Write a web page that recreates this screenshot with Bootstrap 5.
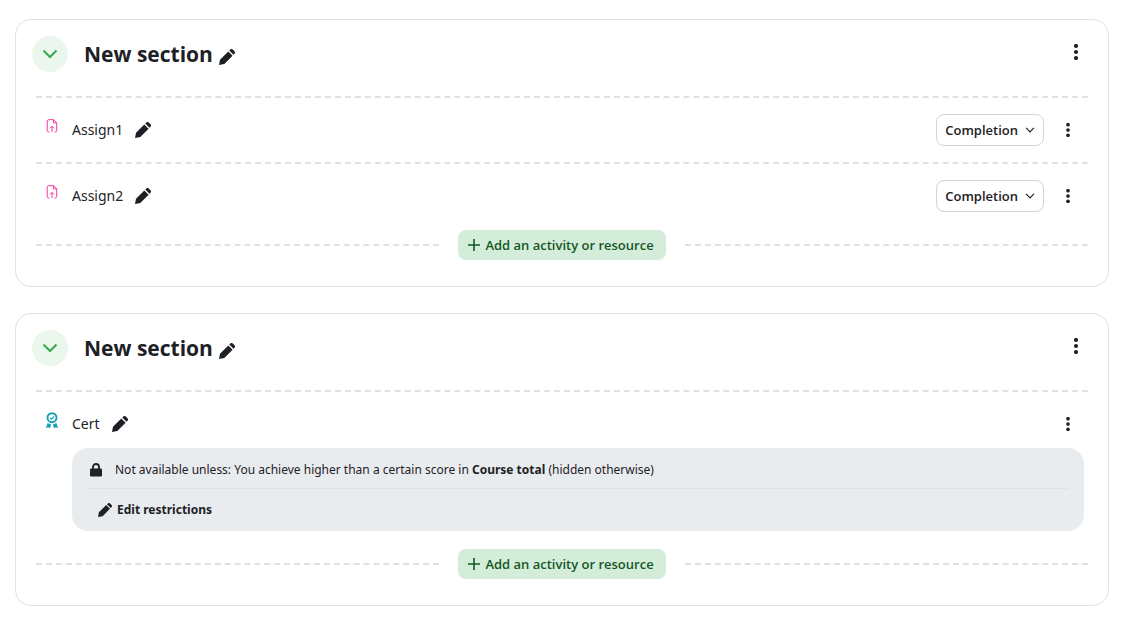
<!DOCTYPE html>
<html lang="en">
<head>
<meta charset="utf-8">
<meta name="viewport" content="width=device-width, initial-scale=1">
<title>Course sections</title>
<link href="https://cdn.jsdelivr.net/npm/bootstrap@5.3.0/dist/css/bootstrap.min.css" rel="stylesheet">
<style>
  body { font-family: "Noto Sans", "Open Sans", sans-serif; font-size: 14px; line-height: 20px; color: #1d2125; background: #fff; }
  svg { display: block; flex: none; }
  .course { padding: 19px 27px 23px 15px; display: grid; gap: 26px; }
  .section { border: 1px solid #dee2e6; border-radius: 16px; padding: 0 20px 26px; }
  .section-head { height: 76px; padding: 16px 4px 0 0; margin-left: -4px; }
  .section-head h2 { font-family: "Open Sans", sans-serif; font-size: 21px; line-height: 36px; font-weight: 700; }
  .plain { border: 0; background: none; padding: 0; color: inherit; display: flex; align-items: center; justify-content: center; }
  .toggle { width: 36px; height: 36px; border-radius: 50%; background: #ebf7ed; color: #37a94c; margin-right: 16px; }
  .head-edit { margin: 13px 0 0 6px; }
  .kebab { width: 16px; height: 32px; }
  .module { border-top: 2px dashed #dee2e6; padding: 16px 12px 16px 8px; }
  .module-row { min-height: 32px; }
  .module-icon { width: 16px; height: 24px; margin-right: 12px; align-self: flex-start; padding-top: 5px; }
  .assign-icon { color: #f7369e; }
  .cert-icon { color: #11a0b4; padding-top: 4px; }
  .name-link { color: inherit; text-decoration: none; margin-right: 12px; }
  .completion { height: 32px; border: 1px solid #ced4da; border-radius: 8px; background: #fff; color: inherit; font-family: "Open Sans", sans-serif; font-size: 13px; font-weight: 600; padding: 0 8px; gap: 7px; margin-right: 16px; }
  .restriction { background: #e9ecef; border-radius: 16px; margin: 8px -8px 0 28px; padding: 0 16px; font-size: 12px; }
  .restriction-text { min-height: 41px; padding: 4px 0 0 2px; gap: 13px; border-bottom: 1px solid #dee2e6; }
  .restriction-edit { min-height: 42px; padding-left: 10px; }
  .restriction-edit a { color: inherit; text-decoration: none; font-weight: 700; gap: 5px; }
  .adder { gap: 19px; margin-top: 2px; }
  .rule { border-top: 2px dashed #dee2e6; }
  .add-btn { height: 30px; border: 0; border-radius: 8px; background: #d4edda; color: #155724; font-family: "Open Sans", sans-serif; font-size: 13px; font-weight: 600; padding: 0 12px 0 10px; gap: 5px; white-space: nowrap; }
</style>
</head>
<body>
<svg class="d-none" aria-hidden="true">
  <symbol id="pencil" viewBox="0 0 16 16"><path fill="currentColor" d="M0 16l1-5.300L9.300 2.400l4.300 4.300L5.300 15zM10.300 1.500l1-1c.7-.7 1.800-.7 2.500 0l1.700 1.700c.7.7.7 1.800 0 2.500l-1 1z"/></symbol>
  <symbol id="dots" viewBox="0 0 6 16"><g fill="currentColor"><circle cx="3" cy="2" r="2.100"/><circle cx="3" cy="8" r="2.100"/><circle cx="3" cy="14" r="2.100"/></g></symbol>
  <symbol id="chevron" viewBox="0 0 16 10"><path d="M1.500 1.500L8 8l6.500-6.500" fill="none" stroke="currentColor" stroke-width="2"/></symbol>
  <symbol id="plus" viewBox="0 0 12 12"><path d="M6 0v12M0 6h12" fill="none" stroke="currentColor" stroke-width="1.600"/></symbol>
  <symbol id="assign" viewBox="0 0 12 14"><path d="M3.500 13H2.700a1.500 1.500 0 0 1-1.500-1.500V2.200A1.500 1.500 0 0 1 2.700.700H7.500L10.700 3.800V11.500a1.500 1.500 0 0 1-1.500 1.500h-.7M7.500 .7v3.100h3.200M6 13V7.500M4 9.300L6 7.300 8 9.300" fill="none" stroke="currentColor"/></symbol>
  <symbol id="cert" viewBox="0 0 14 17"><circle cx="7" cy="5.700" r="4.500" fill="none" stroke="currentColor" stroke-width="1.900"/><path d="M4.900 5.700l1.500 1.500L9.100 4.500" fill="none" stroke="currentColor" stroke-width="1.200"/><path fill="currentColor" d="M2.600 11l3.500 1.400L5 16.300l-1.900-1-2.100.6zM11.400 11L7.900 12.400 9 16.300l1.900-1 2.100.6z"/></symbol>
  <symbol id="lock" viewBox="0 0 12 14"><path d="M3 6V4a3 3 0 0 1 6 0v2" fill="none" stroke="currentColor" stroke-width="1.800"/><rect y="5.500" width="12" height="8" rx="1.300" fill="currentColor"/></symbol>
</svg>

<main class="course">
  <section class="section">
    <header class="section-head d-flex align-items-start">
      <button class="plain toggle" type="button" aria-label="Collapse section"><svg width="16" height="10"><use href="#chevron"/></svg></button>
      <h2 class="m-0">New section</h2>
      <button class="plain head-edit" type="button" aria-label="Edit section name"><svg width="16" height="16"><use href="#pencil"/></svg></button>
      <button class="plain kebab ms-auto" type="button" aria-label="Section actions"><svg width="6" height="16"><use href="#dots"/></svg></button>
    </header>
    <ul class="list-unstyled m-0">
      <li class="module">
        <div class="module-row d-flex align-items-center">
          <span class="module-icon assign-icon d-flex justify-content-center"><svg width="12" height="14"><use href="#assign"/></svg></span>
          <a class="name-link" href="#">Assign1</a>
          <button class="plain" type="button" aria-label="Edit name"><svg width="16" height="16"><use href="#pencil"/></svg></button>
          <button class="completion d-flex align-items-center ms-auto" type="button">Completion <svg width="10" height="6"><use href="#chevron"/></svg></button>
          <button class="plain kebab" type="button" aria-label="Activity actions"><svg width="6" height="14"><use href="#dots"/></svg></button>
        </div>
      </li>
      <li class="module">
        <div class="module-row d-flex align-items-center">
          <span class="module-icon assign-icon d-flex justify-content-center"><svg width="12" height="14"><use href="#assign"/></svg></span>
          <a class="name-link" href="#">Assign2</a>
          <button class="plain" type="button" aria-label="Edit name"><svg width="16" height="16"><use href="#pencil"/></svg></button>
          <button class="completion d-flex align-items-center ms-auto" type="button">Completion <svg width="10" height="6"><use href="#chevron"/></svg></button>
          <button class="plain kebab" type="button" aria-label="Activity actions"><svg width="6" height="14"><use href="#dots"/></svg></button>
        </div>
      </li>
    </ul>
    <div class="adder d-flex align-items-center">
      <div class="rule flex-fill"></div>
      <button class="add-btn d-flex align-items-center" type="button"><svg width="12" height="12"><use href="#plus"/></svg>Add an activity or resource</button>
      <div class="rule flex-fill"></div>
    </div>
  </section>

  <section class="section">
    <header class="section-head d-flex align-items-start">
      <button class="plain toggle" type="button" aria-label="Collapse section"><svg width="16" height="10"><use href="#chevron"/></svg></button>
      <h2 class="m-0">New section</h2>
      <button class="plain head-edit" type="button" aria-label="Edit section name"><svg width="16" height="16"><use href="#pencil"/></svg></button>
      <button class="plain kebab ms-auto" type="button" aria-label="Section actions"><svg width="6" height="16"><use href="#dots"/></svg></button>
    </header>
    <ul class="list-unstyled m-0">
      <li class="module">
        <div class="module-row d-flex align-items-center">
          <span class="module-icon cert-icon d-flex justify-content-center"><svg width="14" height="17"><use href="#cert"/></svg></span>
          <a class="name-link" href="#">Cert</a>
          <button class="plain" type="button" aria-label="Edit name"><svg width="16" height="16"><use href="#pencil"/></svg></button>
          <button class="plain kebab ms-auto" type="button" aria-label="Activity actions"><svg width="6" height="14"><use href="#dots"/></svg></button>
        </div>
        <div class="restriction">
          <div class="restriction-text d-flex align-items-center">
            <svg width="12" height="14"><use href="#lock"/></svg>
            <span>Not available unless: You achieve higher than a certain score in <strong>Course total</strong> (hidden otherwise)</span>
          </div>
          <div class="restriction-edit d-flex align-items-center">
            <a class="d-flex align-items-center" href="#"><svg width="14" height="14"><use href="#pencil"/></svg>Edit restrictions</a>
          </div>
        </div>
      </li>
    </ul>
    <div class="adder d-flex align-items-center">
      <div class="rule flex-fill"></div>
      <button class="add-btn d-flex align-items-center" type="button"><svg width="12" height="12"><use href="#plus"/></svg>Add an activity or resource</button>
      <div class="rule flex-fill"></div>
    </div>
  </section>
</main>
<script src="https://cdn.jsdelivr.net/npm/bootstrap@5.3.0/dist/js/bootstrap.bundle.min.js"></script>
</body>
</html>
